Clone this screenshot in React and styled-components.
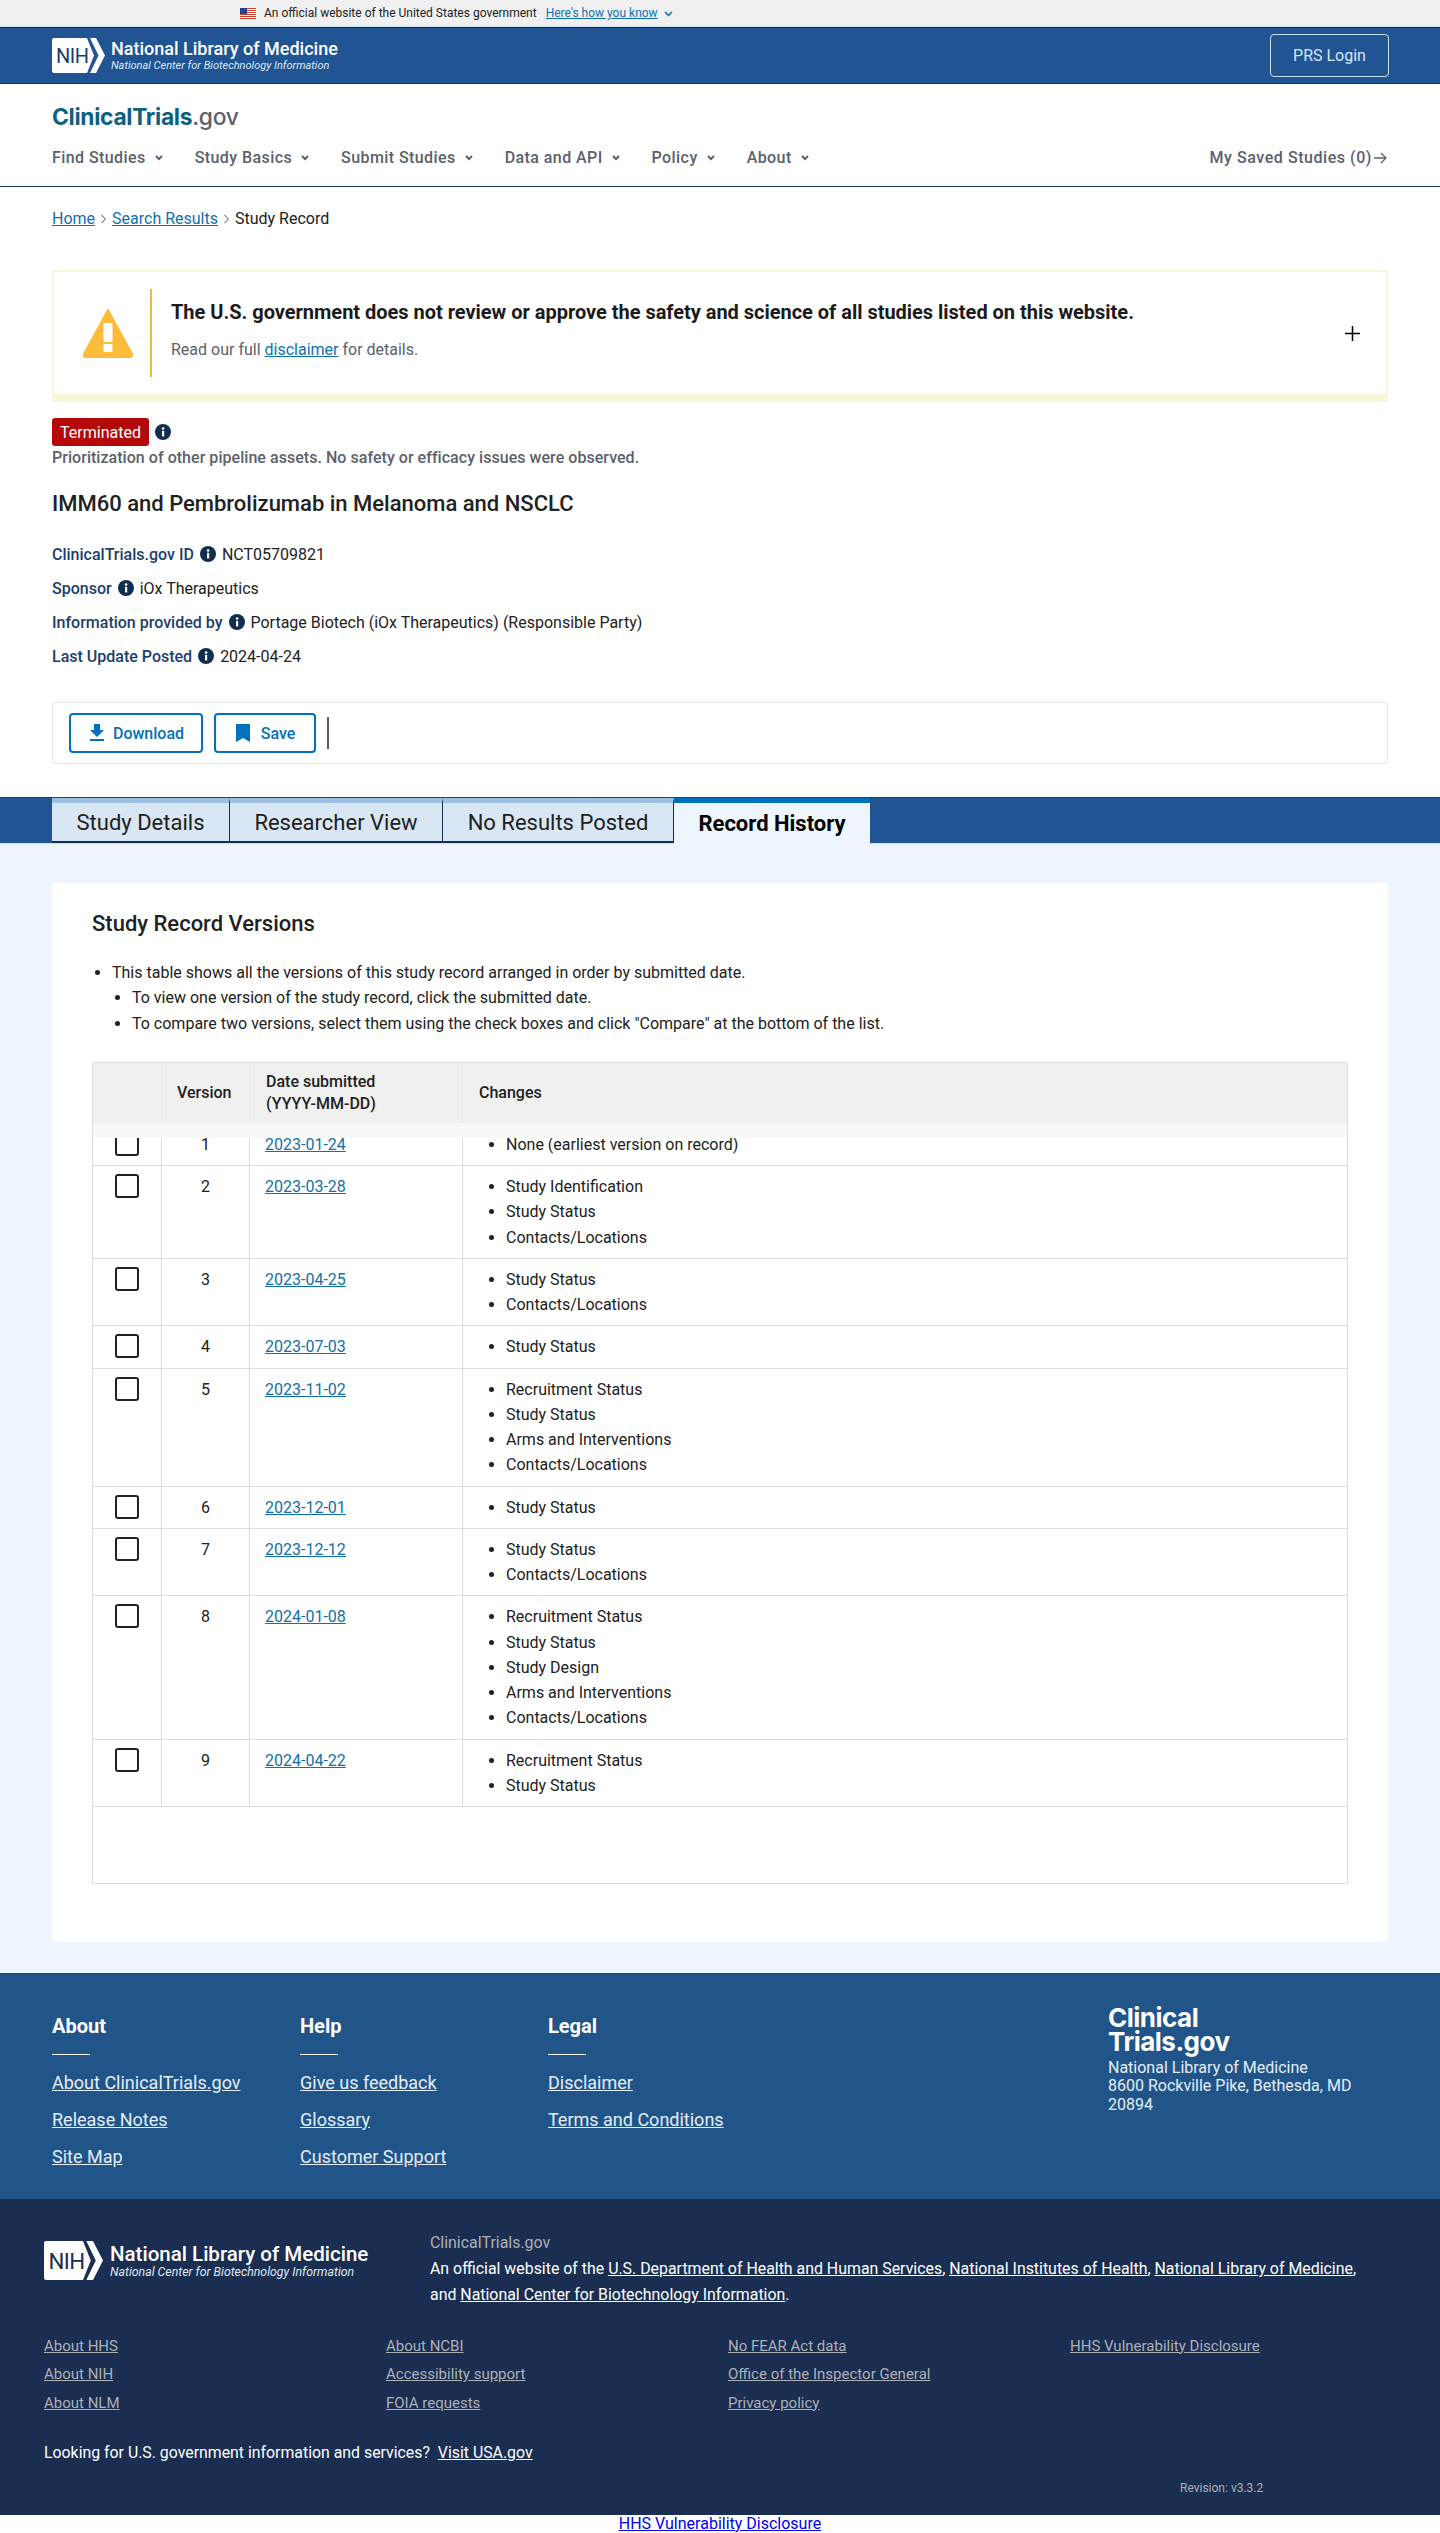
import React from "react";
import styled, { createGlobalStyle } from "styled-components";

const Global = createGlobalStyle`
  html, body { margin: 0; padding: 0; background: #fff; }
  body { font-family: Roboto, "Liberation Sans", sans-serif; font-size: 16px; color: #212121; }
  * { box-sizing: border-box; }
`;

const GovBanner = styled.div`
  height: 27px; background: #f0f0f0; border-bottom: 1px solid #cfe0f0;
  display: flex; align-items: center; padding-left: 240px; font-size: 12px; color: #212121;
`;
const GovText = styled.span`margin-left: 8px;`;
const GovLink = styled.a`margin-left: 9px; color: #1070ae; text-decoration: underline;`;
const GovChevron = styled.svg`margin-left: 6px; margin-top: 2px;`;

const TopBar = styled.header`
  height: 57px; background: #205493; border-top: 1px solid #112e51; border-bottom: 1px solid #112e51;
  display: flex; align-items: center; justify-content: space-between; padding: 0 51px 0 52px;
`;
const LogoRow = styled.div`display: flex; align-items: center;`;
const LogoText = styled.div`
  display: flex; flex-direction: column; color: #fff; margin-left: ${p => p.$gap}px;
`;
const LogoMain = styled.span`font-size: ${p => p.$size}px; font-weight: 500; line-height: ${p => p.$lh}px; white-space: nowrap;`;
const LogoSub = styled.span`font-size: ${p => p.$size}px; font-style: italic; line-height: ${p => p.$lh}px; white-space: nowrap; color: #dfe9f3;`;
const PrsButton = styled.a`
  width: 119px; height: 43px; border: 1px solid #cfe0f0; border-radius: 4px; color: #d9e8f6;
  display: flex; align-items: center; justify-content: center; font-size: 16px;
`;

const NavWrap = styled.div`height: 103px; border-bottom: 1px solid #1d3a5c; padding: 20px 52px 0; background: #fff;`;
const Brand = styled.div`font-family: Inter, Roboto, sans-serif; font-size: 22.8px; line-height: 26px; font-weight: 700; color: #0e5f80; letter-spacing: -0.3px;`;
const BrandGov = styled.span`color: #5b616b; font-weight: 500;`;
const NavRow = styled.nav`display: flex; align-items: center; justify-content: space-between; margin-top: 16px;`;
const NavItems = styled.div`display: flex; gap: 32px;`;
const NavItem = styled.a`display: flex; align-items: center; gap: 9px; font-size: 16px; font-weight: 500; color: #5b616b; line-height: 24px; letter-spacing: 0.42px; white-space: nowrap;`;
const Saved = styled.a`display: flex; align-items: center; gap: 1px; font-size: 16px; font-weight: 500; color: #5b616b; line-height: 22px; letter-spacing: 0.55px;`;

const Content = styled.main`padding: 0 52px; background: #fff;`;
const Crumbs = styled.div`padding-top: 20px; height: 83px; line-height: 24px; font-size: 16px; color: #212121; display: flex; gap: 6px; align-items: flex-start;`;
const Link = styled.a`color: #1070ae; text-decoration: underline;`;
const CrumbSep = styled.svg`margin-top: 7px;`;

const Warning = styled.section`
  height: 132px; border: 2px solid #f9f5d7; border-bottom-width: 8px; border-radius: 2px;
  display: flex; align-items: center; padding-left: 28px;
`;
const WarnDivider = styled.div`width: 2px; height: 88px; background: #f0b93a; margin: 0 19px 0 16px;`;
const WarnBody = styled.div`display: flex; flex-direction: column; flex: 1; margin-top: -6px;`;
const WarnTitle = styled.div`font-size: 20px; font-weight: 700; color: #1b1b1b; line-height: 26px; letter-spacing: -0.02px;`;
const WarnSub = styled.div`font-size: 16px; color: #5b616b; line-height: 24px; margin-top: 13px;`;
const Plus = styled.svg`margin-right: 26px;`;

const StatusRow = styled.div`display: flex; align-items: center; gap: 6px; margin-top: 16px;`;
const Badge = styled.span`
  height: 28px; width: 97px; background: #b50909; border-radius: 3px; color: #fff; font-size: 16px;
  display: flex; align-items: center; justify-content: center;
`;
const WhyStopped = styled.div`font-size: 16px; font-weight: 500; color: #5b616b; line-height: 24px; letter-spacing: 0.04px;`;
const StudyTitle = styled.h1`margin: 18px 0 0; font-size: 22px; font-weight: 500; line-height: 32px; color: #212121;`;
const Meta = styled.dl`margin: 21.5px 0 0; display: flex; flex-direction: column; gap: 9px;`;
const MetaRow = styled.div`display: flex; align-items: center; line-height: 25px; height: 25px;`;
const MetaLabel = styled.dt`font-weight: 500; color: #1a3e6e; margin-right: 6px;`;
const MetaValue = styled.dd`margin: 0 0 0 6px; color: #212121;`;

const Actions = styled.div`
  height: 62px; margin-top: 33.5px; border: 1px solid #e4e4e4; border-radius: 3px;
  display: flex; align-items: center; padding-left: 16px; gap: 11px;
`;
const ActionBtn = styled.a`
  width: ${p => p.$w}px; height: 40px; border: 2px solid #0071bc; border-radius: 4px; color: #0071bc;
  display: flex; align-items: center; justify-content: center; gap: ${p => p.$gap}px; font-weight: 500; font-size: 16px;
`;
const ActionDivider = styled.div`width: 2px; height: 32px; background: #5b616b;`;

const TabBand = styled.div`
  margin-top: 33px; height: 47px; background: #205493; border-top: 1px solid #1a4478; border-bottom: 1px solid #cfe0f0;
  padding-left: 52px; display: flex;
`;
const Tab = styled.a`
  width: ${p => p.$w}px; display: flex; align-items: center; justify-content: center;
  font-size: 22px; color: ${p => (p.$active ? "#000" : "#212121")}; font-weight: ${p => (p.$active ? 700 : 400)};
  background: ${p => (p.$active ? "#eff5fc" : "#d9e6f4")};
  border-top: 5px solid ${p => (p.$active ? "#0071bc" : "#9dbfe3")};
  border-bottom: ${p => (p.$active ? "0" : "2px solid #112e51")};
  border-right: ${p => (p.$active ? "0" : "1px solid #112e51")};
  height: ${p => (p.$active ? "46px" : "45px")};
`;
const Light = styled.div`background: #eff5fc; padding: 39px 52px 31px;`;
const Card = styled.section`background: #fff; border-radius: 3px; height: 1059px; padding: 24px 40px 0;`;
const CardTitle = styled.h2`margin: 0; font-size: 22px; font-weight: 500; line-height: 34px; color: #212121;`;
const Notes = styled.ul`margin: 19px 0 0; padding-left: 20px; line-height: 25.33px; font-size: 16px; color: #212121;`;
const SubNotes = styled.ul`margin: 0; padding-left: 20px; list-style: disc;`;

const Table = styled.div`margin-top: 26px; height: 822px; border-left: 1px solid #ddd; border-right: 1px solid #ddd; border-bottom: 1px solid #ddd;`;
const Head = styled.div`
  position: relative; z-index: 1; height: 76px; display: grid; grid-template-columns: 73px 88px 209px 1fr;
  background: linear-gradient(#f0f0f0 0, #f0f0f0 60px, #f6f6f6 60px, #f9f9f9 76px); border-top: 1px solid #ddd; border-radius: 2px 2px 0 0;
`;
const HeadCell = styled.div`
  height: 60px; display: flex; align-items: center; font-weight: 500; line-height: 22px; font-size: 16px; color: #212121;
  padding-left: ${p => p.$pad}px; border-right: ${p => (p.$end ? "0" : "1px solid #e8e8e8")};
`;
const Rows = styled.div`margin-top: -14px;`;
const Row = styled.div`display: grid; grid-template-columns: 69px 88px 213px 1fr; border-bottom: 1px solid #ddd;`;
const Cell = styled.div`
  padding: 8px 0; line-height: 25.25px; border-right: ${p => (p.$end ? "0" : "1px solid #ddd")};
  text-align: ${p => (p.$center ? "center" : "left")}; padding-left: ${p => p.$pad || 0}px; color: #212121;
`;
const CheckBox = styled.div`width: 24px; height: 24px; border: 2px solid #212121; border-radius: 3px; margin-left: 22px;`;
const Changes = styled.ul`margin: 0; padding: 0 0 0 43px;`;

const FooterTop = styled.div`
  height: 226px; background: #215589; border-top: 2px solid #1d4d80;
  display: grid; grid-template-columns: 248px 248px 1fr 250px; padding: 0 82px 0 52px; color: #fff;
`;
const FootCol = styled.div`padding-top: 37px;`;
const FootHead = styled.div`font-size: 20px; font-weight: 700; line-height: 28px; color: #fff;`;
const FootRule = styled.div`width: 38px; height: 1px; background: #fff; margin: 14px 0 14.5px;`;
const FootLinks = styled.div`display: flex; flex-direction: column; gap: 11.75px; align-items: flex-start;`;
const FootLink = styled.a`font-size: 18px; line-height: 25.5px; color: #e4eef7; text-decoration: underline;`;
const FootBrandCol = styled.div`padding-top: 31px;`;
const FootBrand = styled.div`font-family: Inter, Roboto, sans-serif; font-weight: 700; font-size: 26px; line-height: 24px; color: #fff; letter-spacing: -0.5px;`;
const Address = styled.div`margin-top: 4.6px; font-size: 16px; line-height: 18.5px; color: #e4eef7;`;

const FooterDark = styled.footer`height: 316px; background: #1a2e52; padding: 34px 44px 0; color: #fff; position: relative;`;
const DarkTop = styled.div`display: flex;`;
const DarkLogo = styled.div`width: 386px; display: flex; align-items: flex-start; padding-top: 8px;`;
const Official = styled.div`flex: 1; font-size: 15.9px; line-height: 25.5px;`;
const OfficialHead = styled.div`color: #aeb0b5; line-height: 20px; margin-bottom: 3px;`;
const OfficialLine = styled.div`white-space: nowrap;`;
const WhiteLink = styled.a`color: #fff; text-decoration: underline;`;
const DarkGrid = styled.div`margin-top: 28.5px; display: grid; grid-template-columns: repeat(4, 342px);`;
const DarkCol = styled.div`display: flex; flex-direction: column; gap: 8.5px; align-items: flex-start;`;
const DarkLink = styled.a`font-size: 15px; line-height: 20px; color: #aeb0b5; text-decoration: underline;`;
const Looking = styled.div`margin-top: 28px; font-size: 15.85px; line-height: 24px;`;
const Revision = styled.div`position: absolute; left: 1180px; top: 281px; font-size: 12px; line-height: 16px; color: #aeb0b5;`;
const Bottom = styled.div`height: 18px; line-height: 18px; text-align: center; background: #fff;`;
const PlainLink = styled.a`color: #0000ee; text-decoration: underline; font-size: 16px;`;

const NihLogo = ({ w, h, ink }) => (
  <svg width={w} height={h} viewBox="0 0 53 35">
    <path d="M2 0H35L42 17.5 35 35H2A2 2 0 0 1 0 33V2A2 2 0 0 1 2 0Z" fill="#fff" />
    <path d="M38 0H44L53 17.5 44 35H38L46.500 17.500Z" fill="#fff" />
    <text x="4" y="25" fontFamily="Roboto, sans-serif" fontSize="20" fontWeight="400" letterSpacing="-0.5" fill={ink}>NIH</text>
  </svg>
);
const Info = () => (
  <svg width="16" height="16" viewBox="0 0 16 16">
    <circle cx="8" cy="8" r="8" fill="#112e51" />
    <rect x="7" y="6.800" width="2.200" height="5.600" fill="#fff" />
    <circle cx="8.100" cy="4.500" r="1.300" fill="#fff" />
  </svg>
);
const Chevron = ({ color = "#5b616b", w = 2 }) => (
  <svg width="8" height="6" viewBox="0 0 8 6"><path d="M1 1l3 3 3-3" fill="none" stroke={color} strokeWidth={w} /></svg>
);
const Flag = () => (
  <svg width="16" height="11" viewBox="0 0 16 11">
    <rect width="16" height="11" fill="#fff" />
    {[0, 2, 4, 6, 8, 10].map(y => <rect key={y} y={y} width="16" height="1" fill="#c8402f" />)}
    <rect width="7" height="6" fill="#2b3f8c" />
  </svg>
);
const Sep = () => (
  <CrumbSep width="5" height="10" viewBox="0 0 5 10"><path d="M0.500 1l4 4-4 4" fill="none" stroke="#8a8f96" strokeWidth="1.200" /></CrumbSep>
);

const navs = ["Find Studies", "Study Basics", "Submit Studies", "Data and API", "Policy", "About"];
const rows = [
  ["1", "2023-01-24", ["None (earliest version on record)"]],
  ["2", "2023-03-28", ["Study Identification", "Study Status", "Contacts/Locations"]],
  ["3", "2023-04-25", ["Study Status", "Contacts/Locations"]],
  ["4", "2023-07-03", ["Study Status"]],
  ["5", "2023-11-02", ["Recruitment Status", "Study Status", "Arms and Interventions", "Contacts/Locations"]],
  ["6", "2023-12-01", ["Study Status"]],
  ["7", "2023-12-12", ["Study Status", "Contacts/Locations"]],
  ["8", "2024-01-08", ["Recruitment Status", "Study Status", "Study Design", "Arms and Interventions", "Contacts/Locations"]],
  ["9", "2024-04-22", ["Recruitment Status", "Study Status"]],
];
const footCols = [
  ["About", ["About ClinicalTrials.gov", "Release Notes", "Site Map"]],
  ["Help", ["Give us feedback", "Glossary", "Customer Support"]],
  ["Legal", ["Disclaimer", "Terms and Conditions"]],
];
const darkCols = [
  ["About HHS", "About NIH", "About NLM"],
  ["About NCBI", "Accessibility support", "FOIA requests"],
  ["No FEAR Act data", "Office of the Inspector General", "Privacy policy"],
  ["HHS Vulnerability Disclosure"],
];
const meta = [
  ["ClinicalTrials.gov ID", "NCT05709821"],
  ["Sponsor", "iOx Therapeutics"],
  ["Information provided by", "Portage Biotech (iOx Therapeutics) (Responsible Party)"],
  ["Last Update Posted", "2024-04-24"],
];
const tabs = [["Study Details", 178], ["Researcher View", 213], ["No Results Posted", 231], ["Record History", 196, true]];

export default function App() {
  return (
    <>
      <Global />
      <GovBanner>
        <Flag />
        <GovText>An official website of the United States government</GovText>
        <GovLink>Here's how you know</GovLink>
        <GovChevron width="9" height="6" viewBox="0 0 9 6"><path d="M1 1l3.500 3.500L8 1" fill="none" stroke="#0071bc" strokeWidth="1.500" /></GovChevron>
      </GovBanner>
      <TopBar>
        <LogoRow>
          <NihLogo w={53} h={35} ink="#1b3e6f" />
          <LogoText $gap={6}>
            <LogoMain $size={18} $lh={20}>National Library of Medicine</LogoMain>
            <LogoSub $size={11} $lh={14}>National Center for Biotechnology Information</LogoSub>
          </LogoText>
        </LogoRow>
        <PrsButton>PRS Login</PrsButton>
      </TopBar>
      <NavWrap>
        <Brand>ClinicalTrials<BrandGov>.gov</BrandGov></Brand>
        <NavRow>
          <NavItems>
            {navs.map(n => <NavItem key={n}>{n}<Chevron /></NavItem>)}
          </NavItems>
          <Saved>
            My Saved Studies (0)
            <svg width="15" height="14" viewBox="0 0 15 14"><path d="M1 7h12M8 2l5 5-5 5" fill="none" stroke="#5b616b" strokeWidth="1.300" /></svg>
          </Saved>
        </NavRow>
      </NavWrap>
      <Content>
        <Crumbs>
          <Link>Home</Link><Sep /><Link>Search Results</Link><Sep /><span>Study Record</span>
        </Crumbs>
        <Warning>
          <svg width="52" height="52" viewBox="0 0 52 52">
            <path d="M26 3L50 47a2 2 0 0 1-2 3H4a2 2 0 0 1-2-3Z" fill="#ffbc3a" stroke="#ffbc3a" strokeWidth="2" strokeLinejoin="round" />
            <rect x="21.500" y="16" width="9" height="19" fill="#fff" />
            <rect x="21.500" y="37" width="9" height="8" fill="#fff" />
          </svg>
          <WarnDivider />
          <WarnBody>
            <WarnTitle>The U.S. government does not review or approve the safety and science of all studies listed on this website.</WarnTitle>
            <WarnSub>Read our full <Link>disclaimer</Link> for details.</WarnSub>
          </WarnBody>
          <Plus width="15" height="15" viewBox="0 0 15 15"><path d="M7.500 0v15M0 7.500h15" stroke="#000" strokeWidth="1.500" /></Plus>
        </Warning>
        <StatusRow><Badge>Terminated</Badge><Info /></StatusRow>
        <WhyStopped>Prioritization of other pipeline assets. No safety or efficacy issues were observed.</WhyStopped>
        <StudyTitle>IMM60 and Pembrolizumab in Melanoma and NSCLC</StudyTitle>
        <Meta>
          {meta.map(([l, v]) => (
            <MetaRow key={l}><MetaLabel>{l}</MetaLabel><Info /><MetaValue>{v}</MetaValue></MetaRow>
          ))}
        </Meta>
        <Actions>
          <ActionBtn $w={134} $gap={7}>
            <svg width="18" height="20" viewBox="3 2 18 20"><path d="M19 9h-4V3H9v6H5l7 7 7-7zM5 18v2h14v-2H5z" fill="#0071bc" /></svg>
            Download
          </ActionBtn>
          <ActionBtn $w={102} $gap={10}>
            <svg width="16" height="20" viewBox="5 2 14 20"><path d="M5 3h14v18l-7-4-7 4z" fill="#0071bc" /></svg>
            Save
          </ActionBtn>
          <ActionDivider />
        </Actions>
      </Content>
      <TabBand>
        {tabs.map(([t, w, a]) => <Tab key={t} $w={w} $active={a}>{t}</Tab>)}
      </TabBand>
      <Light>
        <Card>
          <CardTitle>Study Record Versions</CardTitle>
          <Notes>
            <li>
              This table shows all the versions of this study record arranged in order by submitted date.
              <SubNotes>
                <li>To view one version of the study record, click the submitted date.</li>
                <li>To compare two versions, select them using the check boxes and click "Compare" at the bottom of the list.</li>
              </SubNotes>
            </li>
          </Notes>
          <Table>
            <Head>
              <HeadCell />
              <HeadCell $pad={11}>Version</HeadCell>
              <HeadCell $pad={12}>Date submitted<br />(YYYY-MM-DD)</HeadCell>
              <HeadCell $pad={16} $end>Changes</HeadCell>
            </Head>
            <Rows>
              {rows.map(([v, d, c]) => (
                <Row key={v}>
                  <Cell><CheckBox /></Cell>
                  <Cell $center>{v}</Cell>
                  <Cell $pad={15}><Link>{d}</Link></Cell>
                  <Cell $end><Changes>{c.map(i => <li key={i}>{i}</li>)}</Changes></Cell>
                </Row>
              ))}
            </Rows>
          </Table>
        </Card>
      </Light>
      <FooterTop>
        {footCols.map(([h, ls]) => (
          <FootCol key={h}>
            <FootHead>{h}</FootHead>
            <FootRule />
            <FootLinks>{ls.map(l => <FootLink key={l}>{l}</FootLink>)}</FootLinks>
          </FootCol>
        ))}
        <FootBrandCol>
          <FootBrand>Clinical<br />Trials.gov</FootBrand>
          <Address>National Library of Medicine<br />8600 Rockville Pike, Bethesda, MD 20894</Address>
        </FootBrandCol>
      </FooterTop>
      <FooterDark>
        <DarkTop>
          <DarkLogo>
            <NihLogo w={59} h={39} ink="#1a2e52" />
            <LogoText $gap={7}>
              <LogoMain $size={20.500} $lh={26}>National Library of Medicine</LogoMain>
              <LogoSub $size={12.300} $lh={10}>National Center for Biotechnology Information</LogoSub>
            </LogoText>
          </DarkLogo>
          <Official>
            <OfficialHead>ClinicalTrials.gov</OfficialHead>
            <OfficialLine>An official website of the <WhiteLink>U.S. Department of Health and Human Services</WhiteLink>, <WhiteLink>National Institutes of Health</WhiteLink>, <WhiteLink>National Library of Medicine</WhiteLink>,</OfficialLine>
            <OfficialLine>and <WhiteLink>National Center for Biotechnology Information</WhiteLink>.</OfficialLine>
          </Official>
        </DarkTop>
        <DarkGrid>
          {darkCols.map(c => (
            <DarkCol key={c[0]}>{c.map(l => <DarkLink key={l}>{l}</DarkLink>)}</DarkCol>
          ))}
        </DarkGrid>
        <Looking>Looking for U.S. government information and services?&nbsp; <WhiteLink>Visit USA.gov</WhiteLink></Looking>
        <Revision>Revision: v3.3.2</Revision>
      </FooterDark>
      <Bottom><PlainLink>HHS Vulnerability Disclosure</PlainLink></Bottom>
    </>
  );
}
